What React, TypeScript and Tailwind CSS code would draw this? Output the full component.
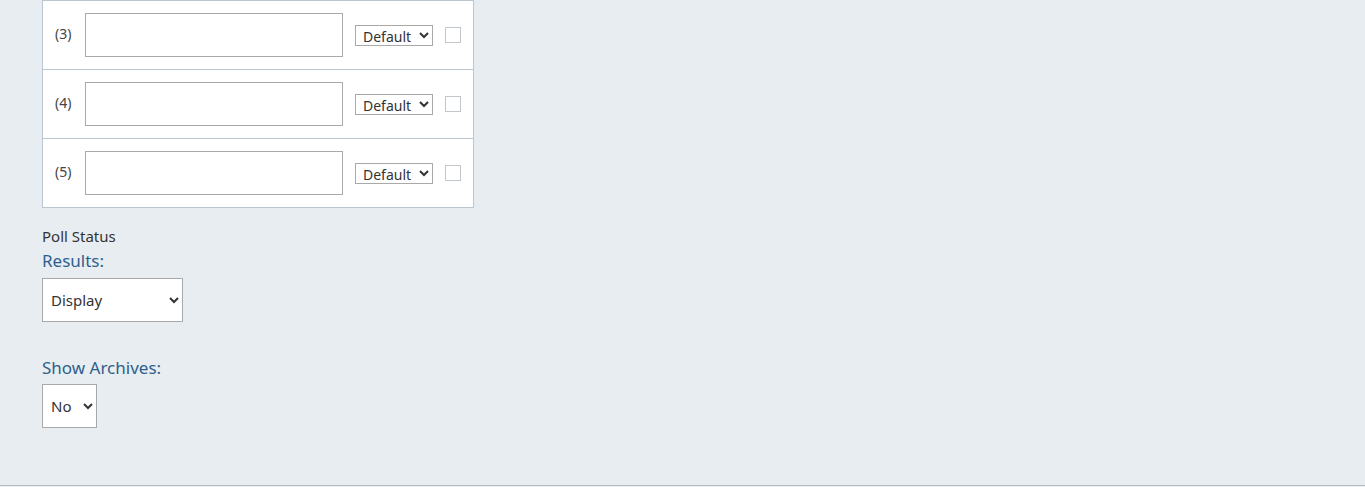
import React from 'react';

const rows = ['(3)', '(4)', '(5)'];

const App: React.FC = () => {
    return (
        <div className="min-h-[487px] bg-[#e8edf2] font-['Noto_Sans','Lato',sans-serif] text-[#333]">
            <div className="h-[486px] border-b border-[#b5bcc3] pl-[42px]">
                {/* Answer rows */}
                <div className="w-[432px] border border-[#bcc6d1] bg-white">
                    {rows.map((label, idx) => (
                        <div
                            key={label}
                            className={`flex items-start pl-[12px] ${idx > 0 ? 'h-[69px] border-t border-[#bcc6d1]' : 'h-[68px]'}`}
                        >
                            <span className="mt-[23px] w-[30px] text-[14px] leading-[20px] text-[#444]">{label}</span>
                            <input
                                type="text"
                                className="mt-[12px] h-[44px] w-[258px] border border-[#a9a9a9] bg-white outline-none"
                            />
                            <select className="ml-[12px] mt-[24px] h-[21px] w-[78px] border border-[#a9a9a9] bg-white pb-[2px] pl-[3px] text-[14px] leading-[16px] text-[#333]">
                                <option>Default</option>
                            </select>
                            <span className="ml-[12px] mt-[26px] h-[16px] w-[16px] border border-[#c2c7cc] bg-white" />
                        </div>
                    ))}
                </div>

                {/* Poll status */}
                <div className="mt-[18px] text-[15px] leading-[20px]">Poll Status</div>
                <div className="mt-[4px] text-[17px] leading-[22px] text-[#2e5f8c]">Results:</div>
                <select className="mt-[6px] h-[44px] w-[141px] border border-[#a9a9a9] bg-white pl-[4px] text-[15px] text-[#333]">
                    <option>Display</option>
                </select>

                <div className="mt-[35px] text-[17px] leading-[22px] text-[#2e5f8c]">Show Archives:</div>
                <select className="mt-[5px] h-[44px] w-[55px] border border-[#a9a9a9] bg-white pl-[4px] text-[15px] text-[#333]">
                    <option>No</option>
                </select>
            </div>
        </div>
    );
};

export default App;
